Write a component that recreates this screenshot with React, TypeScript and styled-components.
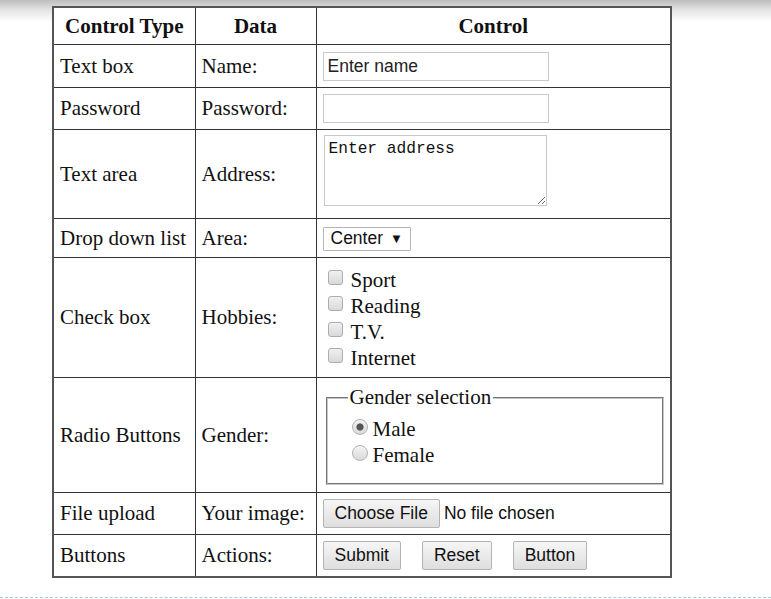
import React from "react"
import styled, { createGlobalStyle } from "styled-components"

const GlobalStyle = createGlobalStyle`
  html, body {
    margin: 0;
    padding: 0;
  }
  body {
    background: linear-gradient(#bdbdbd 0, #e4e4e4 10px, #ffffff 22px) no-repeat;
    background-size: 100% 24px;
    background-color: #fff;
    font-family: "Liberation Serif", "Times New Roman", serif;
    color: #111;
  }
`

const Page = styled.div`
  width: 771px;
  height: 599px;
  padding-top: 6px;
  box-sizing: border-box;
  display: flex;
  flex-direction: column;
`

const Table = styled.table`
  margin-left: 52px;
  width: 618px;
  table-layout: fixed;
  border-collapse: collapse;
  border: 2px solid #555;
  font-size: 21px;
  background: #fff;
`

const Col = styled.col<{ $w: number }>`
  width: ${p => p.$w}px;
`

const Head = styled.th`
  border: 1px solid #333;
  height: 36px;
  padding: 0 6px;
  font-weight: bold;
  text-align: center;
  white-space: nowrap;
`

const Cell = styled.td<{ $h: number }>`
  border: 1px solid #333;
  height: ${p => p.$h}px;
  padding: 0 6px;
  vertical-align: middle;
  white-space: nowrap;
`

const TextInput = styled.input`
  width: 226px;
  height: 29px;
  box-sizing: border-box;
  border: 1px solid #c9c9c9;
  padding: 0 4px;
  font-family: "Liberation Sans", Arial, sans-serif;
  font-size: 17.5px;
  color: #222;
  display: block;
`

const TextArea = styled.textarea`
  width: 223px;
  height: 71px;
  box-sizing: border-box;
  border: 1px solid #c9c9c9;
  padding: 4px 4px;
  font-family: "Liberation Mono", "DejaVu Sans Mono", monospace;
  font-size: 16.2px;
  color: #111;
  display: block;
  margin: 0 0 7px 1px;
`

const Select = styled.div`
  display: inline-flex;
  align-items: center;
  gap: 7px;
  height: 24px;
  box-sizing: border-box;
  padding: 0 7px 0 7px;
  border: 1px solid #b5b5b5;
  border-radius: 1px;
  font-family: "Liberation Sans", Arial, sans-serif;
  font-size: 17.5px;
  color: #111;
  background: #fff;
`

const Arrow = styled.span`
  font-size: 13px;
  line-height: 1;
`

const List = styled.div`
  display: flex;
  flex-direction: column;
  padding: 4px 0 0 5px;
`

const Option = styled.label<{ $gap?: number }>`
  display: flex;
  align-items: center;
  height: 26px;
  gap: ${p => p.$gap ?? 8}px;
`

const Check = styled.input`
  appearance: none;
  width: 15px;
  height: 15px;
  margin: 0 0 6px 0;
  border: 1px solid #adadad;
  border-radius: 3px;
  background: linear-gradient(#f0f0f0, #d9d9d9);
  box-sizing: border-box;
`

const Radio = styled.input`
  appearance: none;
  width: 16px;
  height: 16px;
  margin: 0 0 4px 0;
  border: 1px solid #b3b3b3;
  border-radius: 50%;
  background: linear-gradient(#f3f3f3, #dadada);
  box-sizing: border-box;
  &:checked {
    background: radial-gradient(circle, #555 0 3.2px, transparent 4px),
      linear-gradient(#f3f3f3, #dadada);
  }
`

const Fieldset = styled.fieldset`
  margin: 0 2px 0 3px;
  border: 2px groove #c8c8c8;
  padding: 6px 16px 15px 24px;
  width: 294px;
`

const Legend = styled.legend`
  padding: 0 2px;
  margin-left: -4px;
`

const FileRow = styled.div`
  display: flex;
  align-items: center;
  gap: 4px;
  font-family: "Liberation Sans", Arial, sans-serif;
  font-size: 17.5px;
`

const Button = styled.button<{ $gap?: number }>`
  height: 29px;
  box-sizing: border-box;
  padding: 0 11px;
  margin-right: ${p => p.$gap ?? 0}px;
  border: 1px solid #b4b4b4;
  border-radius: 2px;
  background: linear-gradient(#f6f6f6, #dedede);
  font-family: "Liberation Sans", Arial, sans-serif;
  font-size: 17.5px;
  color: #111;
`

const ButtonRow = styled.div`
  display: flex;
  align-items: center;
`

const Dashed = styled.div`
  margin-top: auto;
  margin-bottom: 1px;
  height: 0;
  border-top: 1px dashed #a3c9e4;
`

export default function App() {
  return (
    <Page>
      <GlobalStyle />
      <Table>
        <colgroup>
          <Col $w={142} />
          <Col $w={121} />
          <Col $w={355} />
        </colgroup>
        <thead>
          <tr>
            <Head>Control Type</Head>
            <Head>Data</Head>
            <Head>Control</Head>
          </tr>
        </thead>
        <tbody>
          <tr>
            <Cell $h={42}>Text box</Cell>
            <Cell $h={42}>Name:</Cell>
            <Cell $h={42}>
              <TextInput type="text" defaultValue="Enter name" />
            </Cell>
          </tr>
          <tr>
            <Cell $h={41}>Password</Cell>
            <Cell $h={41}>Password:</Cell>
            <Cell $h={41}>
              <TextInput type="password" />
            </Cell>
          </tr>
          <tr>
            <Cell $h={88}>Text area</Cell>
            <Cell $h={88}>Address:</Cell>
            <Cell $h={88}>
              <TextArea defaultValue="Enter address" />
            </Cell>
          </tr>
          <tr>
            <Cell $h={38}>Drop down list</Cell>
            <Cell $h={38}>Area:</Cell>
            <Cell $h={38}>
              <Select>
                Center <Arrow>▼</Arrow>
              </Select>
            </Cell>
          </tr>
          <tr>
            <Cell $h={119}>Check box</Cell>
            <Cell $h={119}>Hobbies:</Cell>
            <Cell $h={119}>
              <List>
                {["Sport", "Reading", "T.V.", "Internet"].map(h => (
                  <Option key={h}>
                    <Check type="checkbox" />
                    {h}
                  </Option>
                ))}
              </List>
            </Cell>
          </tr>
          <tr>
            <Cell $h={114}>Radio Buttons</Cell>
            <Cell $h={114}>Gender:</Cell>
            <Cell $h={114}>
              <Fieldset>
                <Legend>Gender selection</Legend>
                <Option $gap={5}>
                  <Radio type="radio" name="gender" defaultChecked />
                  Male
                </Option>
                <Option $gap={5}>
                  <Radio type="radio" name="gender" />
                  Female
                </Option>
              </Fieldset>
            </Cell>
          </tr>
          <tr>
            <Cell $h={41}>File upload</Cell>
            <Cell $h={41}>Your image:</Cell>
            <Cell $h={41}>
              <FileRow>
                <Button type="button">Choose File</Button>
                <span>No file chosen</span>
              </FileRow>
            </Cell>
          </tr>
          <tr>
            <Cell $h={41}>Buttons</Cell>
            <Cell $h={41}>Actions:</Cell>
            <Cell $h={41}>
              <ButtonRow>
                <Button type="submit" $gap={21}>Submit</Button>
                <Button type="reset" $gap={21}>Reset</Button>
                <Button type="button">Button</Button>
              </ButtonRow>
            </Cell>
          </tr>
        </tbody>
      </Table>
      <Dashed />
    </Page>
  )
}
